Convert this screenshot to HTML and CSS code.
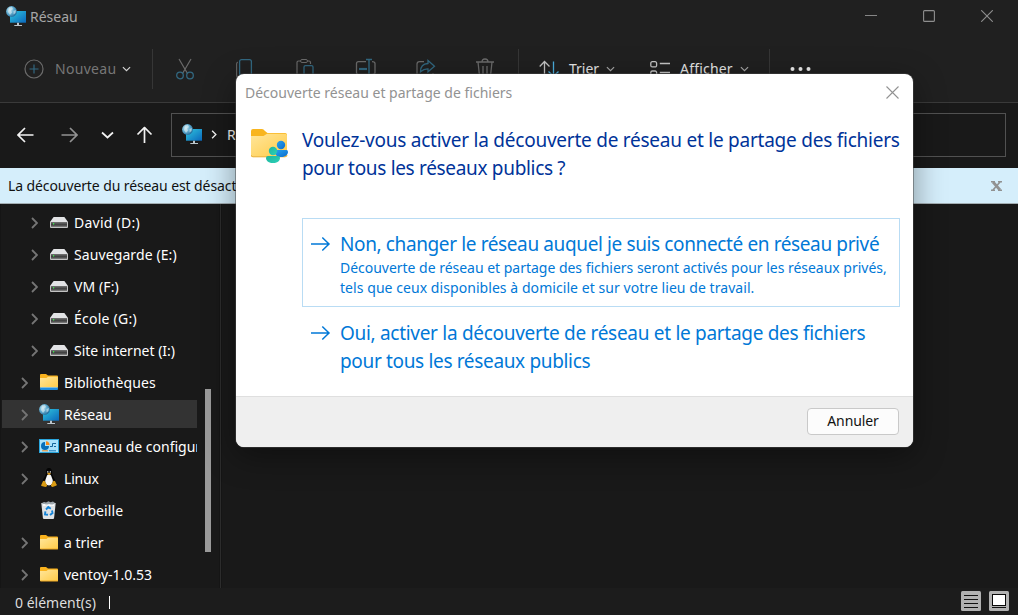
FILE: index.html
```html
<!DOCTYPE html>
<html lang="fr">
<head>
<meta charset="utf-8">
<title>Réseau</title>
<link rel="stylesheet" href="styles.css">
</head>
<body>
<svg class="defs" width="0" height="0">
  <defs>
    <linearGradient id="gScreen" x1="0" y1="0" x2="1" y2="1"><stop offset="0" stop-color="#30c6dd"/><stop offset="1" stop-color="#0b68bd"/></linearGradient>
    <radialGradient id="gGlobe" cx=".35" cy=".35" r=".7"><stop offset="0" stop-color="#c5e6f3"/><stop offset=".5" stop-color="#65afd2"/><stop offset="1" stop-color="#246d9d"/></radialGradient>
    <linearGradient id="gFolder" x1="0" y1="0" x2="1" y2="1"><stop offset="0" stop-color="#ffe69b"/><stop offset="1" stop-color="#ffcb47"/></linearGradient>
    <linearGradient id="gDrive" x1="0" y1="0" x2="0" y2="1"><stop offset="0" stop-color="#767676"/><stop offset=".5" stop-color="#414141"/><stop offset="1" stop-color="#666"/></linearGradient>
    <linearGradient id="gBlue" x1="0" y1="0" x2="1" y2="1"><stop offset="0" stop-color="#28a2ed"/><stop offset="1" stop-color="#0a6cce"/></linearGradient>
    <linearGradient id="gTeal" x1="0" y1="0" x2="1" y2="1"><stop offset="0" stop-color="#1fb59b"/><stop offset="1" stop-color="#2bd0b9"/></linearGradient>
    <symbol id="network" viewBox="0 0 20 20">
      <path d="M4 5h16v11.7H4z" fill="url(#gScreen)"/>
      <path d="M11 16.700h2v2.300h3v1H8.300v-1H11z" fill="#bbc5cc"/>
      <circle cx="5.500" cy="5.500" r="5.400" fill="url(#gGlobe)"/>
      <path d="M3 1.500l3-.6 1 2-2 1.600 1 2-2 2.500-2-3zM7.500 5l2.500-1-.5 3-2 1.500z" fill="#deedf2" opacity=".6"/>
    </symbol>
    <symbol id="drive" viewBox="0 0 18 11">
      <path d="M3.600 0h10.800L18 5H0z" fill="#e2e3e5"/>
      <path d="M0 5h18v5q0 1-1 1H1q-1 0-1-1z" fill="#c3c3c3"/>
      <path d="M1 5h16v4.800H1z" fill="url(#gDrive)"/>
      <path d="M3 6h1.200v1.500H3z" fill="#3de84c"/>
    </symbol>
    <symbol id="folder" viewBox="0 0 18 15">
      <path d="M0 1q0-1 1-1h5l2 1.600h9q1 0 1 1V6H0z" fill="#f9b21d"/>
      <path d="M0 4h6.500L8 2.700h9q1 0 1 1V14H0z" fill="url(#gFolder)"/>
      <path d="M0 13.500h18V14q0 .5-1 .5H1q-1 0-1-1z" fill="#efaa25"/>
    </symbol>
    <symbol id="library" viewBox="0 0 18 16">
      <path d="M0 1q0-1 1-1h5l2 1.600h9q1 0 1 1V6H0z" fill="#f9b21d"/>
      <path d="M0 4h6.500L8 2.700h9q1 0 1 1V14H0z" fill="url(#gFolder)"/>
      <path d="M0 13.500h18V15q0 1-1 1H1q-1 0-1-1z" fill="#1f8de0"/><path d="M1 13h16v1H1z" fill="#85bed8"/>
    </symbol>
    <symbol id="panel" viewBox="0 0 20 14">
      <path d="M0 0h20v14H0z" fill="#2aa5dc"/><path d="M1 1h18v12H1z" fill="#a9e2fb"/>
      <path d="M6 3a4 4 0 1 0 4 4H6z" fill="#086fb9"/><path d="M7 2.300A4 4 0 0 1 10.600 6H7z" fill="#f58a1b"/>
      <path d="M11 7.500h2.500v-3H17M15 7.500h2" fill="none" stroke="#15669b"/>
      <path d="M3 11.800h6" stroke="#ef8c22"/><path d="M10 11.800h7" stroke="#187ab8"/>
    </symbol>
    <symbol id="tux" viewBox="0 0 16 20">
      <path d="M8 0C5.500 0 4.700 2 5 5c0 3-3 5-3.500 9l3 4h7l3-4C14 10 11 8 11 5c.2-3-.7-5-3-5z" fill="#050505"/>
      <path d="M8 6.500c-2.500 0-2 2-3.300 4.500C3.300 14 5 17.500 8 17.500s4.700-3.500 3.400-6.500C10.200 8.500 10.500 6.500 8 6.500z" fill="#f8f8f8"/>
      <path d="M6.100 3h1.300v1.800H6.100zM8.700 3H10v1.800H8.700z" fill="#aaa"/>
      <path d="M6 5.500L8 4.500l2 1-2 1.700z" fill="#d89a20"/>
      <path d="M2 13l1.500-.2L6 17q.3 2-1.600 2L.5 18q-.8-.5 0-1.600zM14 13l-1.500-.2L10 17q-.3 2 1.600 2l3.900-1.600q.9-.5-.2-1.500z" fill="#d99b13"/>
    </symbol>
    <symbol id="bin" viewBox="0 0 15 18">
      <path d="M.3 2h14.400l-1.600 15q-.2 1-1.100 1H3q-.9 0-1.100-1z" fill="#dfe3e6"/>
      <path d="M1 2l2-1 2 .5L7.500.3l2 1L12 .5l2 1.500-1.500 1.300H2z" fill="#9da5ab"/>
      <path d="M2 3h2l1 2 3-2 3 1.500L13 3v2H2z" fill="#f8fafb"/>
      <path d="M5 8.500L7.300 6l2.500 1.700M11 9.500l.5 2.500-2.500 2M7 13.800l-3-.4.4-3" fill="none" stroke="#1684d6" stroke-width="1.900"/>
    </symbol>
    <symbol id="down" viewBox="0 0 10 6"><path d="M1 1l4 3.800L9 1" fill="none" stroke="currentColor" stroke-width="1.300"/></symbol>
    <symbol id="right" viewBox="0 0 7 12"><path d="M1 1l5 5-5 5" fill="none" stroke="currentColor" stroke-width="1.800"/></symbol>
    <symbol id="arrow" viewBox="0 0 20 16"><path d="M0 8h18M11.300 1.500L18 8l-6.700 6.500" fill="none" stroke="currentColor" stroke-width="1.500"/></symbol>
    <symbol id="navarrow" viewBox="0 0 17 16"><path d="M.5 8H16M9 1l7 7-7 7" fill="none" stroke="currentColor" stroke-width="1.700"/></symbol>
  </defs>
</svg>

<div class="window">
  <header class="titlebar">
    <svg class="net-icon"><use href="#network"/></svg>
    <span class="window-title">Réseau</span>
    <div class="caption-buttons">
      <svg width="12" height="12"><path d="M0 5.500h12" stroke="#868686"/></svg>
      <svg width="12" height="12"><rect x=".6" y=".6" width="10.800" height="10.800" rx="1" fill="none" stroke="#8e8e8e" stroke-width="1.100"/></svg>
      <svg width="12" height="12"><path d="M.2.200l11.600 11.600M11.800.200L.2 11.800" stroke="#8e8e8e" stroke-width="1.100"/></svg>
    </div>
  </header>

  <div class="toolbar">
    <svg class="plus" width="20" height="20"><circle cx="10" cy="10" r="9" fill="none" stroke="#6b6b6b" stroke-width="1.200"/><path d="M10 5.500v9M5.500 10h9" stroke="#326881" stroke-width="1.200"/></svg>
    <span class="new-label">Nouveau</span>
    <svg class="chev bright"><use href="#down"/></svg>
    <i class="rule rule-first"></i>
    <svg class="tool cut" width="20" height="22" fill="none"><path d="M4 1l8.500 14.500M16 1L7.500 15.500" stroke="#6b6b6b" stroke-width="1.200"/><circle cx="5" cy="17.500" r="3.300" stroke="#326881" stroke-width="1.300"/><circle cx="15" cy="17.500" r="3.300" stroke="#326881" stroke-width="1.300"/></svg>
    <svg class="tool" width="20" height="22" fill="none"><path d="M2.700 4q-1.100 1-1.100 2v11q0 4 4 4h6" stroke="#626262" stroke-width="1.200"/><rect x="4.600" y="1.600" width="11.800" height="16" rx="2" stroke="#326881" stroke-width="1.300"/></svg>
    <svg class="tool" width="20" height="22" fill="none"><path d="M5 3H3.500Q2 3 2 4.500V19q0 2 2 2h3M12.500 3H14q1.500 0 1.500 1.500V6" stroke="#6b6b6b" stroke-width="1.200"/><rect x="5.500" y="1.500" width="7" height="3" rx="1.500" stroke="#6b6b6b"/><rect x="9" y="7.600" width="9" height="13" rx="1.500" stroke="#326881" stroke-width="1.300"/></svg>
    <svg class="tool" width="22" height="22" fill="none"><path d="M11 3.600H3.500q-2 0-2 2v9q0 2 2 2H11M17 3.600q3 0 3 2v9q0 2-3 2" stroke="#6b6b6b" stroke-width="1.300"/><path d="M11 1.500h6M14 1.500v17M11 18.500h6" stroke="#326881" stroke-width="1.400"/><path d="M4 11h8" stroke="#326881" stroke-width="2.200"/></svg>
    <svg class="tool share" width="22" height="22" fill="none"><path d="M9 3.600H4.500q-2.500 0-2.500 2.500v10q0 3 3 3h10q3 0 3-3V15" stroke="#6b6b6b" stroke-width="1.200"/><path d="M13 2.500l6.500 5.800-6.500 5.500v-3q-4-.2-7.500 3 0-8 7.500-8.300z" stroke="#326881" stroke-width="1.300"/></svg>
    <svg class="tool trash" width="20" height="22" fill="none" stroke="#6b6b6b" stroke-width="1.300"><path d="M1 4h18M7 4q0-3 3-3t3 3M3 4l1.500 14q.2 2 2 2h7q1.800 0 2-2L17 4M8 8v8M12 8v8"/></svg>
    <i class="rule rule-second"></i>
    <svg class="sort" width="20" height="18" fill="none" stroke-width="1.300"><path d="M5.500 16V1.500M.7 6.500l4.800-5 5 5" stroke="#c5c5c5"/><path d="M14.500 1.500V16M9.500 11.500l5 4.700 5-4.700" stroke="#4baede"/></svg>
    <span class="tool-label sort-label">Trier</span>
    <svg class="chev"><use href="#down"/></svg>
    <svg class="view" width="20" height="18" fill="none" stroke="#c5c5c5" stroke-width="1.300"><rect x=".8" y="1.700" width="5.800" height="5.200" rx="1.500"/><rect x=".8" y="11" width="5.800" height="5.200" rx="1.500"/><path d="M9.800 3.500H20M9.800 12.500H20"/></svg>
    <span class="tool-label view-label">Afficher</span>
    <svg class="chev"><use href="#down"/></svg>
    <i class="rule rule-third"></i>
    <svg class="more" width="22" height="6" fill="#eee"><circle cx="2.500" cy="3" r="2"/><circle cx="10.500" cy="3" r="2"/><circle cx="18.500" cy="3" r="2"/></svg>
  </div>

  <nav class="navbar">
    <svg class="nav-arrow back"><use href="#navarrow"/></svg>
    <svg class="nav-arrow next"><use href="#navarrow"/></svg>
    <svg class="recent" width="13" height="9"><path d="M1 1.500l5.500 5L12 1.500" fill="none" stroke="#f2f2f2" stroke-width="1.700"/></svg>
    <svg class="nav-arrow up"><use href="#navarrow"/></svg>
    <div class="address">
      <svg class="net-icon"><use href="#network"/></svg>
      <svg class="crumb"><use href="#right"/></svg>
      <span class="address-text">Réseau</span>
    </div>
  </nav>

  <div class="infobar">
    <span>La découverte du réseau est désactivée.</span>
    <svg width="11" height="10"><path d="M0 .700h4M7 .700h4M0 9.300h4M7 9.300h4" stroke="#919191" stroke-width="1.400"/><path d="M2 1l7 8" stroke="#919191" stroke-width="2.800"/><path d="M9 1L2 9" stroke="#919191" stroke-width="1.700"/></svg>
  </div>

  <main class="content">
    <aside class="tree">
      <div class="row child"><svg class="expand"><use href="#right"/></svg><svg class="drive"><use href="#drive"/></svg><span class="wider">David (D:)</span></div>
      <div class="row child"><svg class="expand"><use href="#right"/></svg><svg class="drive"><use href="#drive"/></svg><span class="wide">Sauvegarde (E:)</span></div>
      <div class="row child"><svg class="expand"><use href="#right"/></svg><svg class="drive"><use href="#drive"/></svg><span class="wide">VM (F:)</span></div>
      <div class="row child"><svg class="expand"><use href="#right"/></svg><svg class="drive"><use href="#drive"/></svg><span class="wider">École (G:)</span></div>
      <div class="row child"><svg class="expand"><use href="#right"/></svg><svg class="drive"><use href="#drive"/></svg><span>Site internet (I:)</span></div>
      <div class="row"><svg class="expand"><use href="#right"/></svg><svg class="library"><use href="#library"/></svg><span class="wide">Bibliothèques</span></div>
      <div class="row selected"><svg class="expand"><use href="#right"/></svg><svg class="net-icon"><use href="#network"/></svg><span>Réseau</span></div>
      <div class="row"><svg class="expand"><use href="#right"/></svg><svg class="panel"><use href="#panel"/></svg><span>Panneau de configuration</span></div>
      <div class="row"><svg class="expand"><use href="#right"/></svg><svg class="tux"><use href="#tux"/></svg><span class="narrow">Linux</span></div>
      <div class="row"><i class="expand"></i><svg class="bin"><use href="#bin"/></svg><span class="wide">Corbeille</span></div>
      <div class="row"><svg class="expand"><use href="#right"/></svg><svg class="folder"><use href="#folder"/></svg><span>a trier</span></div>
      <div class="row"><svg class="expand"><use href="#right"/></svg><svg class="folder"><use href="#folder"/></svg><span>ventoy-1.0.53</span></div>
    </aside>
    <div class="scroll-track"><div class="scroll-thumb"></div></div>
    <div class="splitter"></div>
  </main>

  <footer class="statusbar">
    <span>0 élément(s)</span><i class="caret"></i>
    <div class="modes">
      <svg width="20" height="20"><rect width="20" height="20" rx="1.500" fill="#b1b1b1"/><path d="M3 4.500h14M3 8.500h14M3 12.500h14M3 16.500h14" stroke="#111"/></svg>
      <svg width="20" height="20"><rect width="20" height="20" rx="1.500" fill="#b1b1b1"/><rect x="3.500" y="3.500" width="13" height="11" fill="#fff" stroke="#080808"/><path d="M3 16.500h14" stroke="#111"/></svg>
    </div>
  </footer>
</div>

<section class="dialog">
  <header class="dialog-title"><span>Découverte réseau et partage de fichiers</span>
    <svg width="13" height="13"><path d="M.5.500l12 12M12.500.500l-12 12" stroke="#929292" stroke-width="1.100"/></svg>
  </header>
  <div class="dialog-body">
    <svg class="shared-folder" width="38" height="36" viewBox="0 0 38 36">
      <path d="M0 2q0-2 2-2h9q1.500 0 3 2l2.500 2H34q2 0 2 2v4H0z" fill="#f8b51f"/>
      <path d="M0 7h12.500L16 4.700h18q2 0 2 2V26q0 1.800-2 1.800H2Q0 27.800 0 26z" fill="url(#gFolder)"/>
      <path d="M0 26q0 1.800 2 1.800h32q2 0 2-1.800" fill="none" stroke="#e9ae34"/>
      <circle cx="30" cy="16" r="4.200" fill="url(#gBlue)"/><path d="M26 21h9.500q1.500 0 1.500 2c0 3-3.500 5-7 5s-6-2-6-4.500q0-2.500 2-2.500z" fill="url(#gBlue)"/>
      <circle cx="22" cy="22" r="4.200" fill="url(#gTeal)"/><path d="M17 27h10q2 0 2 2c0 3-3 5-7 5s-7-2-7-5q0-2 2-2z" fill="url(#gTeal)"/>
    </svg>
    <div class="choices">
      <h1><span class="h-one">Voulez-vous activer la découverte de réseau et le partage des fichiers</span><br><span class="h-two">pour tous les réseaux publics ?</span></h1>
      <div class="choice focused">
        <svg class="choice-arrow"><use href="#arrow"/></svg>
        <div class="choice-text"><div class="choice-title c-one">Non, changer le réseau auquel je suis connecté en réseau privé</div>
        <p><span class="p-one">Découverte de réseau et partage des fichiers seront activés pour les réseaux privés,</span><br><span class="p-two">tels que ceux disponibles à domicile et sur votre lieu de travail.</span></p></div>
      </div>
      <div class="choice">
        <svg class="choice-arrow"><use href="#arrow"/></svg>
        <div class="choice-text"><div class="choice-title"><span class="c-two">Oui, activer la découverte de réseau et le partage des fichiers</span><br><span class="c-three">pour tous les réseaux publics</span></div></div>
      </div>
    </div>
  </div>
  <footer class="dialog-footer"><button>Annuler</button></footer>
</section>
</body>
</html>
```
FILE: styles.css
```css
* { box-sizing: border-box; }
body { margin: 0; background: #191919; font: 14px/20px "Noto Sans", "Open Sans", sans-serif; overflow: hidden; }
svg { display: block; flex: none; }
.defs { position: absolute; }
span { white-space: nowrap; }
.window { width: 1018px; height: 615px; display: flex; flex-direction: column; color: #fff; background: #191919; }
.titlebar { height: 32px; flex: none; display: flex; align-items: center; padding: 0 25px 0 6px; background: #202020; color: #a6a6a6; }
.net-icon { width: 20px; height: 20px; }
.titlebar .net-icon { margin-top: -1px; }
.window-title { margin-left: 4px; padding-top: 2px; }
.caption-buttons { display: flex; gap: 46px; margin-left: auto; }

.toolbar { height: 71px; flex: none; display: flex; align-items: center; padding: 4px 0 0 24px; background: #202020; border-bottom: 1px solid #3a3a3a; }
.new-label { margin-left: 11px; width: 67px; color: #777; letter-spacing: .3px; }
.chev { width: 9px; height: 6px; color: #aaa; }
.chev.bright { color: #d5d5d5; }
.rule { width: 1px; height: 40px; margin-top: -1px; background: #363636; flex: none; }
.rule-first { margin-left: 21px; }
.tool { margin-left: 40px; }
.tool.cut { margin-left: 22px; }
.tool.share { margin-left: 38px; }
.tool.trash { margin-left: 38px; }
.rule-second { margin-left: 23px; }
.sort { margin-left: 20px; }
.tool-label { color: #e7e7e7; }
.sort-label { margin-left: 10px; width: 37px; }
.view { margin-left: 35px; }
.view-label { margin-left: 10px; width: 60px; letter-spacing: .2px; }
.rule-third { margin-left: 20px; }
.more { margin-left: 20px; }

.navbar { height: 65px; flex: none; display: flex; align-items: center; padding: 0 12px 2px 17px; color: #f2f2f2; }
.nav-arrow { width: 17px; height: 16px; }
.back { transform: scaleX(-1); }
.next { margin-left: 27px; color: #929292; }
.recent { margin-left: 23px; margin-top: 2px; }
.up { margin-left: 22px; transform: rotate(-90deg); }
.address { margin-left: 18px; flex: 1; height: 44px; border: 1px solid #515151; display: flex; align-items: center; padding-left: 10px; margin-top: 1px; }
.address .net-icon { margin-top: -3px; }
.crumb { width: 6px; height: 9px; margin: -2px 0 0 9px; }
.address-text { margin-left: 10px; }

.infobar { height: 36px; flex: none; display: flex; align-items: center; justify-content: space-between; padding: 1px 16px 0 8px; background: #d5eefb; border-bottom: 1px solid #a3aeb3; color: #111; letter-spacing: -.1px; }
.content { flex: 1; min-height: 0; display: flex; }
.tree { width: 197px; padding: 4px 0 0 2px; display: flex; flex-direction: column; gap: 4px; overflow: hidden; border-left: 1px solid #151515; }
.row { height: 28px; flex: none; display: flex; align-items: center; padding-left: 18px; overflow: hidden; }
.row.child { padding-left: 28px; }
.row.selected { background: #333; margin-left: -1px; padding-left: 19px; }
.expand { width: 7px; height: 12px; color: #757575; margin: 1px 12px 0 0; flex: none; }
.row > span { margin-left: 6px; padding-top: 2px; }
.wide { letter-spacing: .1px; }
.wider { letter-spacing: .25px; }
.narrow { letter-spacing: -.2px; }
.drive { width: 18px; height: 11px; }
.row .net-icon, .panel { margin-left: -1px; margin-right: -1px; }
.library { width: 18px; height: 16px; }
.folder { width: 18px; height: 15px; }
.panel { width: 20px; height: 14px; }
.tux { width: 16px; height: 20px; margin: 0 1px; }
.bin { width: 15px; height: 18px; margin: 0 2px 0 1px; }
.scroll-track { width: 22px; padding: 185px 0 0 8px; }
.scroll-thumb { width: 6px; height: 163px; background: #9a9a9a; }
.splitter { width: 3px; background: #2c2c2c; border: solid #151515; border-width: 0 1px; }
.statusbar { height: 27px; flex: none; display: flex; align-items: center; background: #1c1c1c; padding: 2px 8px 0 15px; color: #ddd; }
.caret { width: 1px; height: 13px; background: #fff; margin-left: 13px; }
.modes { margin: -3px 1px 0 auto; display: flex; gap: 8px; }

.dialog { position: absolute; left: 236px; top: 74px; width: 677px; height: 373px; display: flex; flex-direction: column; overflow: hidden; border-radius: 8px; background: #fff; box-shadow: 0 0 0 1px #45454580, 0 8px 32px #0006; }
.dialog-title { height: 37px; display: flex; align-items: center; justify-content: space-between; padding: 0 14px 0 9px; color: #929292; flex: none; }
.dialog-body { flex: 1; display: flex; padding: 15px 13px 0 15px; }
.shared-folder { margin-top: 3px; }
.choices { margin-left: 13px; width: 598px; }
h1 { margin: 0 0 36px; font-size: 19px; line-height: 28px; font-weight: 400; color: #003399; }
.h-one { letter-spacing: -.24px; }
.h-two { letter-spacing: -.32px; }
.choice { display: flex; padding: 11px 8px 0; border: 1px solid transparent; color: #0078d7; }
.choice.focused { height: 89px; border-color: #b9dcf4; }
.choice-arrow { width: 20px; height: 16px; margin-top: 6px; }
.choice-text { margin-left: 9px; }
.choice-title { font-size: 19px; line-height: 28px; white-space: nowrap; }
.c-one { letter-spacing: -.38px; }
.c-two { letter-spacing: -.3px; }
.c-three { letter-spacing: -.34px; }
.choice p { margin: 0; }
.p-one { letter-spacing: -.02px; }
.p-two { letter-spacing: .06px; }
.dialog-footer { height: 51px; flex: none; display: flex; align-items: center; justify-content: flex-end; padding: 0 14px 2px; background: #efefef; border-top: 1px solid #dfdfdf; }
button { width: 92px; height: 27px; border: 1px solid #c9c9c9; border-radius: 4px; background: #fcfcfc; color: #111; font: 14px/20px "Noto Sans", sans-serif; letter-spacing: -.1px; padding: 0; }
```
